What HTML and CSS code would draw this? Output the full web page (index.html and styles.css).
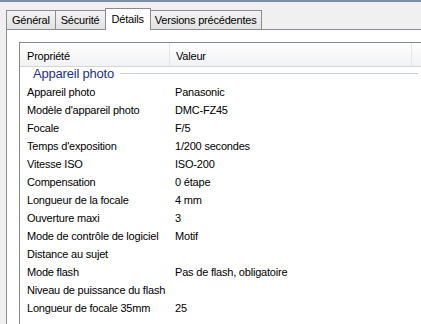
FILE: index.html
```html
<!DOCTYPE html>
<html>
<head>
    <meta charset="UTF-8">
    <title>Propriétés - Détails</title>
    <link rel="stylesheet" href="styles.css">
</head>
<body>
<div class="window">
    <div class="tabs">
        <span class="tab">Général</span>
        <span class="tab">Sécurité</span>
        <span class="tab on">Détails</span>
        <span class="tab wide">Versions précédentes</span>
    </div>
    <div class="panel">
        <div class="list">
            <div class="head">
                <span class="col1">Propriété</span>
                <span class="col2">Valeur</span>
                <span class="col3"></span>
            </div>
            <div class="group"><span>Appareil photo</span></div>
            <div class="row"><span class="col1">Appareil photo</span><span class="col2">Panasonic</span></div>
            <div class="row"><span class="col1">Modèle d'appareil photo</span><span class="col2">DMC-FZ45</span></div>
            <div class="row"><span class="col1">Focale</span><span class="col2">F/5</span></div>
            <div class="row"><span class="col1">Temps d'exposition</span><span class="col2">1/200 secondes</span></div>
            <div class="row"><span class="col1">Vitesse ISO</span><span class="col2">ISO-200</span></div>
            <div class="row"><span class="col1">Compensation</span><span class="col2">0 étape</span></div>
            <div class="row"><span class="col1">Longueur de la focale</span><span class="col2">4 mm</span></div>
            <div class="row"><span class="col1">Ouverture maxi</span><span class="col2">3</span></div>
            <div class="row"><span class="col1">Mode de contrôle de logiciel</span><span class="col2">Motif</span></div>
            <div class="row"><span class="col1">Distance au sujet</span><span class="col2"></span></div>
            <div class="row"><span class="col1">Mode flash</span><span class="col2">Pas de flash, obligatoire</span></div>
            <div class="row"><span class="col1">Niveau de puissance du flash</span><span class="col2"></span></div>
            <div class="row"><span class="col1">Longueur de focale 35mm</span><span class="col2">25</span></div>
        </div>
    </div>
</div>
</body>
</html>
```

FILE: styles.css
```css
* { margin: 0; padding: 0; box-sizing: border-box;}
html, body { width: 421px; height: 324px; overflow: hidden;}
body { font-family: "Liberation Sans", Arial, sans-serif; font-size: 11px; letter-spacing: -0.2px; color: #000; background: #f0f0f0;}
.window { width: 421px; height: 324px; overflow: hidden; background: #f0f0f0; border-top: 2px solid #7d8ea3;}
.tabs { display: flex; align-items: flex-end; height: 27px; padding-left: 6px;}
.tab { height: 19px; line-height: 19px; padding: 0 5px; border: 1px solid #898c95; border-bottom: none; border-right: none; background: linear-gradient(#f2f2f2, #e3e3e3);}
.tab.wide { padding: 0 4px; border-right: 1px solid #898c95;}
.tab.on { height: 22px; line-height: 21px; background: #fff; margin-bottom: -1px; position: relative; border-right: 1px solid #898c95; padding: 0 6px;}
.tab.on + .tab { border-left: none;}
.panel { margin-left: 6px; width: 460px; height: 300px; background: #fff; border: 1px solid #898c95; padding: 12px 0 0 12px;}
.list { border: 1px solid #828790; border-right: none; height: 300px;}
.head { display: flex; height: 24px; line-height: 27px; background: linear-gradient(#fff, #f1f2f4); border-bottom: 1px solid #d5d5d5;}
.head .col1 { width: 150px; padding-left: 7px; border-right: 1px solid #e3e5e9;}
.head .col2 { width: 242px; padding-left: 6px; border-right: 1px solid #e3e5e9;}
.group { display: flex; align-items: center; height: 14px; margin-top: -1px; padding-left: 13px; font-size: 13px; color: #1e3287;}
.group span { padding-right: 6px;}
.group::after { content: ""; width: 298px; height: 1px; background: #c7cede;}
.group + .row { margin-top: 3px;}
.row { display: flex; height: 18px; line-height: 18px;}
.row .col1 { width: 150px; padding-left: 7px; white-space: nowrap;}
.row .col2 { padding-left: 5px; white-space: nowrap;}
```
